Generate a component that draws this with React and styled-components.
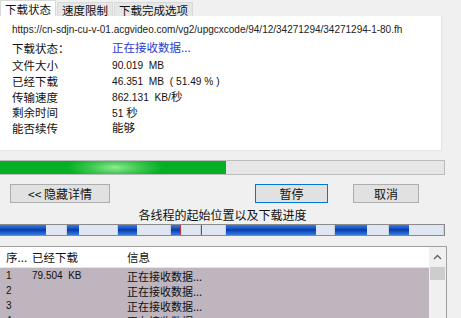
import React from 'react';
import styled, { createGlobalStyle } from 'styled-components';

const GlobalStyle = createGlobalStyle`
  html, body {
    margin: 0;
    padding: 0;
    background: #f0f0f0;
  }
  body {
    font-family: "Liberation Sans", "Noto Sans CJK SC", sans-serif;
    font-size: 11px;
    color: #000;
  }
`;

const Window = styled.div`
  width: 461px;
  height: 318px;
  overflow: hidden;
  background: #f0f0f0;
  display: flex;
  flex-direction: column;

  & > * {
    flex-shrink: 0;
  }
`;

const TabBar = styled.div`
  display: flex;
  align-items: flex-end;
  height: 16px;
`;

const Tab = styled.div`
  height: ${p => (p.$active ? '16px' : '14px')};
  padding: 0 4px;
  margin-left: ${p => (p.$active ? '0' : '1px')};
  display: flex;
  align-items: center;
  font-family: "Noto Sans CJK SC", sans-serif;
  font-size: 11.5px;
  background: ${p => (p.$active ? '#ffffff' : '#e6e6e6')};
  border: 1px solid #d9d9d9;
  border-bottom: none;
  box-sizing: border-box;
  color: #111;
`;

const Panel = styled.div`
  width: 442px;
  height: 135px;
  background: #fff;
  border-right: 1px solid #e3e3e3;
  border-bottom: 1px solid #e3e3e3;
  box-sizing: border-box;
  padding: 6px 0 0 12px;
`;

const Url = styled.div`
  height: 16px;
  line-height: 16px;
  font-size: 10px;
  color: #222;
  white-space: nowrap;
`;

const InfoRow = styled.div`
  display: grid;
  grid-template-columns: 100px 1fr;
  height: ${p => (p.$tall ? '20px' : '15.5px')};
  line-height: 15px;
  align-items: center;
`;

const Label = styled.span`
  font-family: "Noto Sans CJK SC", sans-serif;
  font-size: 11.5px;
  color: #111;
`;

const Value = styled.span`
  font-family: "Liberation Sans", "Noto Sans CJK SC", sans-serif;
  font-size: 10.2px;
  color: ${p => (p.$blue ? '#2b3bd0' : '#111')};
  white-space: pre;
`;

const Cjk = styled.span`
  font-family: "Noto Sans CJK SC", sans-serif;
  font-size: 11.5px;
`;

const ProgressTrack = styled.div`
  margin-top: 9px;
  width: 445px;
  height: 15px;
  background: #e6e6e6;
  border: 1px solid #bcbcbc;
  border-left: none;
  box-sizing: border-box;
  display: flex;
`;

const ProgressFill = styled.div`
  height: 100%;
  background:
    radial-gradient(ellipse 48px 12px at 115px 50%, rgba(150, 238, 150, 0.95), rgba(150, 238, 150, 0.4) 50%, rgba(150, 238, 150, 0) 100%),
    #06b025;
`;

const ButtonRow = styled.div`
  display: flex;
  margin-top: 9px;
  height: 19px;
`;

const Button = styled.div`
  width: ${p => p.$w}px;
  margin-left: ${p => p.$ml}px;
  height: 19px;
  box-sizing: border-box;
  background: #e1e1e1;
  border: 1px solid ${p => (p.$focus ? '#0078d7' : '#adadad')};
  display: flex;
  align-items: center;
  justify-content: center;
  font-family: "Noto Sans CJK SC", sans-serif;
  font-size: 12px;
  color: #111;
`;

const Caption = styled.div`
  width: 445px;
  text-align: center;
  margin-top: 3px;
  height: 18px;
  line-height: 18px;
  font-family: "Noto Sans CJK SC", sans-serif;
  font-size: 12px;
  color: #111;
`;

const ThreadBar = styled.div`
  width: 445px;
  height: 12px;
  display: flex;
  border: 1px solid #8a8a8a;
  border-left: none;
  box-sizing: border-box;
  background: #dfe5f1;
`;

const Segment = styled.div`
  height: 100%;
  box-sizing: border-box;
  background: ${p => (p.$done
    ? 'linear-gradient(#3b7be0 0%, #1452c4 35%, #0a3a9a 50%, #1452c4 65%, #3b7be0 100%)'
    : '#dfe5f1')};
  border-left: ${p => (p.$mark ? '1px solid #c03040' : 'none')};
  border-right: ${p => (!p.$done ? '1px solid #c9cfdb' : 'none')};
`;

const List = styled.div`
  margin-top: 10px;
  width: 447px;
  flex: 1 0 auto;
  border-top: 1px solid #a0a0a0;
  border-right: 1px solid #a0a0a0;
  box-sizing: border-box;
  display: flex;
  background: #fff;
`;

const ListBody = styled.div`
  flex: 1;
  display: flex;
  flex-direction: column;
`;

const Columns = styled.div`
  display: grid;
  grid-template-columns: 27px 95px 1fr;
  height: ${p => (p.$header ? '20px' : '15px')};
  line-height: 14px;
  align-items: center;
  background: ${p => (p.$header ? '#fff' : '#bfb5be')};
  border-bottom: ${p => (p.$header ? '1px solid #e5e5e5' : 'none')};
  flex-shrink: 0;
`;

const Cell = styled.span`
  padding-left: ${p => (p.$first ? '6px' : '5px')};
  font-family: ${p => (p.$latin
    ? '"Liberation Sans", sans-serif'
    : '"Noto Sans CJK SC", sans-serif')};
  font-size: ${p => (p.$latin ? '10px' : p.$head ? '11.5px' : '11px')};
  color: #111;
  white-space: pre;
  overflow: hidden;
`;

const Scrollbar = styled.div`
  width: 17px;
  background: #f0f0f0;
  display: flex;
  flex-direction: column;
`;

const ScrollButton = styled.div`
  height: 20px;
  display: flex;
  align-items: center;
  justify-content: center;
`;

const Thumb = styled.div`
  height: 13px;
  margin: 0 1px;
  background: #cdcdcd;
`;

const segments = [
  { w: 46, done: true },
  { w: 21 },
  { w: 12, done: true },
  { w: 39 },
  { w: 19, done: true },
  { w: 34 },
  { w: 9, done: true },
  { w: 21, mark: true },
  { w: 25, mark: true },
  { w: 90, done: true },
  { w: 19 },
  { w: 32, done: true },
  { w: 22 },
  { w: 20, done: true },
  { w: 35 },
];

const info = [
  ['文件大小', '90.019  MB'],
  ['已经下载', '46.351  MB  ( 51.49 % )'],
  ['传输速度', '862.131  KB/', '秒'],
  ['剩余时间', '51 ', '秒'],
  ['能否续传', null, '能够'],
];

const rows = [
  ['1', '79.504  KB'],
  ['2', ''],
  ['3', ''],
  ['4', ''],
];

export default function App() {
  return (
    <>
      <GlobalStyle />
      <Window>
        <TabBar>
          <Tab $active>下载状态</Tab>
          <Tab>速度限制</Tab>
          <Tab>下载完成选项</Tab>
        </TabBar>
        <Panel>
          <Url>https://cn-sdjn-cu-v-01.acgvideo.com/vg2/upgcxcode/94/12/34271294/34271294-1-80.fh</Url>
          <InfoRow $tall>
            <Label>下载状态：</Label>
            <Value $blue><Cjk>正在接收数据...</Cjk></Value>
          </InfoRow>
          {info.map(([label, num, unit]) => (
            <InfoRow key={label}>
              <Label>{label}</Label>
              <Value>
                {num}
                {unit && <Cjk>{unit}</Cjk>}
              </Value>
            </InfoRow>
          ))}
        </Panel>
        <ProgressTrack>
          <ProgressFill style={{ width: '51%' }} />
        </ProgressTrack>
        <ButtonRow>
          <Button $w={100} $ml={10}>&lt;&lt; 隐藏详情</Button>
          <Button $w={73} $ml={145} $focus>暂停</Button>
          <Button $w={66} $ml={25}>取消</Button>
        </ButtonRow>
        <Caption>各线程的起始位置以及下载进度</Caption>
        <ThreadBar>
          {segments.map((s, i) => (
            <Segment key={i} $done={s.done} $mark={s.mark} style={{ width: s.w }} />
          ))}
        </ThreadBar>
        <List>
          <ListBody>
            <Columns $header>
              <Cell $first $head>序...</Cell>
              <Cell $head>已经下载</Cell>
              <Cell $head>信息</Cell>
            </Columns>
            {rows.map(([n, size]) => (
              <Columns key={n}>
                <Cell $first $latin>{n}</Cell>
                <Cell $latin>{size}</Cell>
                <Cell>正在接收数据...</Cell>
              </Columns>
            ))}
          </ListBody>
          <Scrollbar>
            <ScrollButton>
              <svg width="9" height="6" viewBox="0 0 9 6">
                <path d="M1 5 L4.5 1.5 L8 5" fill="none" stroke="#606060" strokeWidth="1.3" />
              </svg>
            </ScrollButton>
            <Thumb />
          </Scrollbar>
        </List>
      </Window>
    </>
  );
}
